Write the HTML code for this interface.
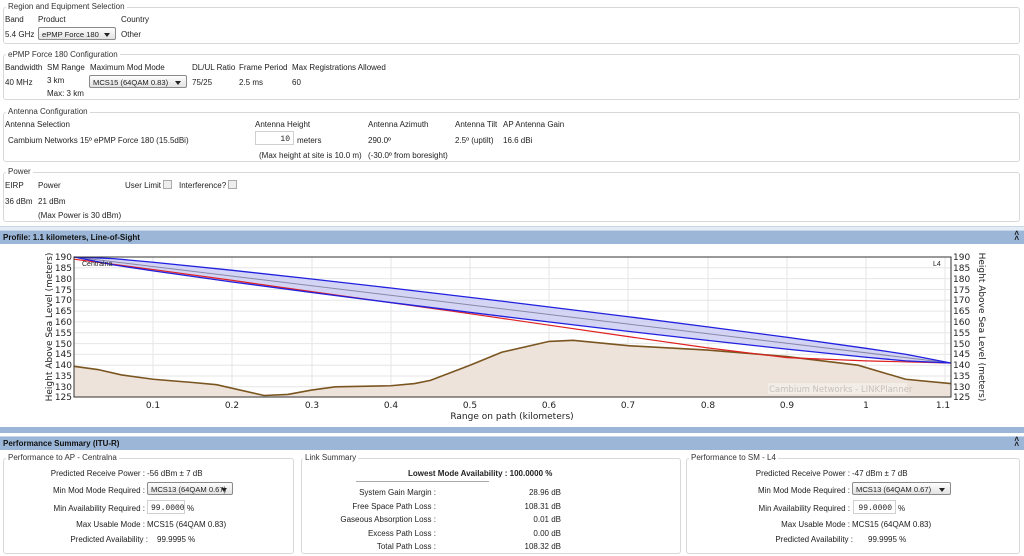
<!DOCTYPE html>
<html><head><meta charset="utf-8"><style>
*{margin:0;padding:0;box-sizing:border-box}
body{width:1024px;height:556px;background:#fff;font-family:"Liberation Sans",sans-serif;font-size:8px;color:#222;position:relative;overflow:hidden}
.a{position:absolute;white-space:nowrap}
.box{position:absolute;border:1px solid #d8d8d8;border-radius:3px}
.lg{position:absolute;background:#fff;padding:0 2px;white-space:nowrap;color:#333}
.sel{position:absolute;border:1px solid #8a8a8a;background:linear-gradient(#fdfdfd,#e2e2e2);height:13px;padding:2px 3px;border-radius:2px;white-space:nowrap;font-size:7.6px;overflow:hidden}
.sel:after{content:"";position:absolute;right:5px;top:5px;border:3px solid transparent;border-top:4px solid #222}
.inp{position:absolute;border:1px solid #d0d0d0;background:#fff;height:14px;text-align:right;padding:3px 3px;font-family:"Liberation Mono",monospace}
.cb{position:absolute;width:9px;height:9px;border:1px solid #aaa;background:#eee}
.hdr{position:absolute;left:0;width:1024px;height:14px;background:#9bb6d6;border-top:1px solid #c5d6ea;font-weight:bold;padding:2px 3px;color:#111}
.r{text-align:right}
</style></head><body>
<!-- Region -->
<div class="box" style="left:3px;top:7px;width:1017px;height:37px"></div>
<div class="lg" style="left:6px;top:2px">Region and Equipment Selection</div>
<div class="a" style="left:5px;top:15px">Band</div>
<div class="a" style="left:38px;top:15px">Product</div>
<div class="a" style="left:121px;top:15px">Country</div>
<div class="a" style="left:5px;top:30px">5.4 GHz</div>
<div class="sel" style="left:38px;top:27px;width:78px">ePMP Force 180</div>
<div class="a" style="left:121px;top:30px">Other</div>
<!-- ePMP -->
<div class="box" style="left:3px;top:54px;width:1017px;height:46px"></div>
<div class="lg" style="left:6px;top:50px">ePMP Force 180 Configuration</div>
<div class="a" style="left:5px;top:63px">Bandwidth</div>
<div class="a" style="left:47px;top:63px">SM Range</div>
<div class="a" style="left:90px;top:63px">Maximum Mod Mode</div>
<div class="a" style="left:192px;top:63px">DL/UL Ratio</div>
<div class="a" style="left:239px;top:63px">Frame Period</div>
<div class="a" style="left:292px;top:63px">Max Registrations Allowed</div>
<div class="a" style="left:5px;top:78px">40 MHz</div>
<div class="a" style="left:47px;top:76px">3 km</div>
<div class="a" style="left:47px;top:89px">Max: 3 km</div>
<div class="sel" style="left:89px;top:75px;width:98px">MCS15 (64QAM 0.83)</div>
<div class="a" style="left:192px;top:78px">75/25</div>
<div class="a" style="left:239px;top:78px">2.5 ms</div>
<div class="a" style="left:292px;top:78px">60</div>
<!-- Antenna -->
<div class="box" style="left:3px;top:112px;width:1017px;height:50px"></div>
<div class="lg" style="left:6px;top:107px">Antenna Configuration</div>
<div class="a" style="left:5px;top:120px">Antenna Selection</div>
<div class="a" style="left:255px;top:120px">Antenna Height</div>
<div class="a" style="left:368px;top:120px">Antenna Azimuth</div>
<div class="a" style="left:455px;top:120px">Antenna Tilt</div>
<div class="a" style="left:503px;top:120px">AP Antenna Gain</div>
<div class="a" style="left:8px;top:136px">Cambium Networks 15º ePMP Force 180 (15.5dBi)</div>
<div class="inp" style="left:255px;top:131px;width:39px">10</div>
<div class="a" style="left:297px;top:136px">meters</div>
<div class="a" style="left:368px;top:136px">290.0º</div>
<div class="a" style="left:455px;top:136px">2.5º (uptilt)</div>
<div class="a" style="left:503px;top:136px">16.6 dBi</div>
<div class="a" style="left:259px;top:151px">(Max height at site is 10.0 m)</div>
<div class="a" style="left:368px;top:151px">(-30.0º from boresight)</div>
<!-- Power -->
<div class="box" style="left:3px;top:172px;width:1017px;height:50px"></div>
<div class="lg" style="left:6px;top:167px">Power</div>
<div class="a" style="left:5px;top:181px">EIRP</div>
<div class="a" style="left:38px;top:181px">Power</div>
<div class="a" style="left:125px;top:181px">User Limit</div>
<div class="cb" style="left:163px;top:180px"></div>
<div class="a" style="left:179px;top:181px">Interference?</div>
<div class="cb" style="left:228px;top:180px"></div>
<div class="a" style="left:5px;top:197px">36 dBm</div>
<div class="a" style="left:38px;top:197px">21 dBm</div>
<div class="a" style="left:38px;top:211px">(Max Power is 30 dBm)</div>
<div style="position:absolute;left:0;top:226px;width:1024px;height:4px;background:#e4ecf5;border-top:1px solid #c8d6e6"></div>
<div class="hdr" style="top:230px">Profile: 1.1 kilometers, Line-of-Sight<span style="position:absolute;right:5px;top:0px;font-size:8px;line-height:5px">&#708;<br>&#708;</span></div>
<!-- chart -->
<svg class="a" style="left:0;top:0" width="1024" height="556">
<g stroke="#e6e6e6" stroke-width="1">
<line x1="74" x2="951" y1="267.8" y2="267.8"/><line x1="74" x2="951" y1="278.6" y2="278.6"/><line x1="74" x2="951" y1="289.5" y2="289.5"/><line x1="74" x2="951" y1="300.3" y2="300.3"/><line x1="74" x2="951" y1="311.1" y2="311.1"/><line x1="74" x2="951" y1="321.9" y2="321.9"/><line x1="74" x2="951" y1="332.7" y2="332.7"/><line x1="74" x2="951" y1="343.6" y2="343.6"/><line x1="74" x2="951" y1="354.4" y2="354.4"/><line x1="74" x2="951" y1="365.2" y2="365.2"/><line x1="74" x2="951" y1="376" y2="376"/><line x1="74" x2="951" y1="386.8" y2="386.8"/>
<line x1="153" x2="153" y1="257" y2="397"/><line x1="232" x2="232" y1="257" y2="397"/><line x1="312" x2="312" y1="257" y2="397"/><line x1="391" x2="391" y1="257" y2="397"/><line x1="470" x2="470" y1="257" y2="397"/><line x1="549" x2="549" y1="257" y2="397"/><line x1="628" x2="628" y1="257" y2="397"/><line x1="708" x2="708" y1="257" y2="397"/><line x1="787" x2="787" y1="257" y2="397"/><line x1="866" x2="866" y1="257" y2="397"/><line x1="945" x2="945" y1="257" y2="397"/>
</g>
<g transform="translate(74,257) scale(792,-2.164) translate(0,-190)">
<path d="M0,125 L0,139.5 0.03,138 0.06,135.5 0.1,133.5 0.15,132 0.18,131 0.24,126 0.27,126.5 0.3,128.5 0.33,130 0.4,130.5 0.43,131.5 0.45,133 0.5,140 0.54,146 0.6,151 0.63,151.5 0.7,149 0.8,147 0.9,144 0.99,140 1.05,133.5 1.107,131.5 L1.107,125Z" fill="#eee3da"/>
<path d="M0,139.5 0.03,138 0.06,135.5 0.1,133.5 0.15,132 0.18,131 0.24,126 0.27,126.5 0.3,128.5 0.33,130 0.4,130.5 0.43,131.5 0.45,133 0.5,140 0.54,146 0.6,151 0.63,151.5 0.7,149 0.8,147 0.9,144 0.99,140 1.05,133.5 1.107,131.5" fill="none" stroke="#7a5520" stroke-width="1.6" vector-effect="non-scaling-stroke"/>
<path d="M0,190 0.05,189.24 0.1,187.57 0.2,183.84 0.3,179.83 0.4,175.66 0.55,169.16 0.7,162.4 0.8,157.73 0.9,152.9 1.0,147.81 1.05,145.07 1.107,141 1.05,141.99 1.0,143.67 0.9,147.44 0.8,151.47 0.7,155.64 0.55,162.16 0.4,168.94 0.3,173.61 0.2,178.46 0.1,183.57 0.05,186.34Z" fill="#c9c9f2" fill-opacity="0.8"/>
<path d="M0,190 1.107,141" stroke="#8888a8" stroke-width="1" vector-effect="non-scaling-stroke"/>
<path d="M0,189 0.1,184.2 0.2,179.2 0.3,174 0.4,168.9 0.5,163.8 0.6,158.5 0.7,153.2 0.8,148 0.9,143.5 1.0,142 1.107,141" fill="none" stroke="#e02020" stroke-width="1.2" vector-effect="non-scaling-stroke"/>
<path d="M0,190 0.05,189.24 0.1,187.57 0.2,183.84 0.3,179.83 0.4,175.66 0.55,169.16 0.7,162.4 0.8,157.73 0.9,152.9 1.0,147.81 1.05,145.07 1.107,141" fill="none" stroke="#2020e0" stroke-width="1.3" vector-effect="non-scaling-stroke"/>
<path d="M0,190 0.05,186.34 0.1,183.57 0.2,178.46 0.3,173.61 0.4,168.94 0.55,162.16 0.7,155.64 0.8,151.47 0.9,147.44 1.0,143.67 1.05,141.99 1.107,141" fill="none" stroke="#2020e0" stroke-width="1.3" vector-effect="non-scaling-stroke"/>
</g>
<rect x="74" y="257" width="877" height="140" fill="none" stroke="#333" stroke-width="1"/>
<text x="82" y="266" font-family="Liberation Sans" font-size="7" fill="#222">Centralna</text>
<text x="933" y="266" font-family="Liberation Sans" font-size="7" fill="#222">L4</text>
<rect x="768" y="383" width="139" height="11" fill="#f3ede8"/>
<text x="769" y="392" font-family="DejaVu Sans" font-size="8.5" fill="#c8c0ba">Cambium Networks - LINKPlanner</text>
<g font-family="DejaVu Sans" font-size="9" fill="#222">
<g text-anchor="end">
<text x="72" y="260">190</text><text x="72" y="271">185</text><text x="72" y="282">180</text><text x="72" y="293">175</text><text x="72" y="303">170</text><text x="72" y="314">165</text><text x="72" y="325">160</text><text x="72" y="336">155</text><text x="72" y="347">150</text><text x="72" y="357">145</text><text x="72" y="368">140</text><text x="72" y="379">135</text><text x="72" y="390">130</text><text x="72" y="400">125</text>
</g>
<g>
<text x="953" y="260">190</text><text x="953" y="271">185</text><text x="953" y="282">180</text><text x="953" y="293">175</text><text x="953" y="303">170</text><text x="953" y="314">165</text><text x="953" y="325">160</text><text x="953" y="336">155</text><text x="953" y="347">150</text><text x="953" y="357">145</text><text x="953" y="368">140</text><text x="953" y="379">135</text><text x="953" y="390">130</text><text x="953" y="400">125</text>
</g>
<g text-anchor="middle">
<text x="153" y="408">0.1</text><text x="232" y="408">0.2</text><text x="312" y="408">0.3</text><text x="391" y="408">0.4</text><text x="470" y="408">0.5</text><text x="549" y="408">0.6</text><text x="628" y="408">0.7</text><text x="708" y="408">0.8</text><text x="787" y="408">0.9</text><text x="866" y="408">1</text><text x="943" y="408">1.1</text>
<text x="512" y="419">Range on path (kilometers)</text>
<text transform="translate(52,327) rotate(-90)">Height Above Sea Level (meters)</text>
<text transform="translate(979,327) rotate(90)">Height Above Sea Level (meters)</text>
</g></g>
</svg>
<div style="position:absolute;left:0;top:427px;width:1024px;height:6px;background:#9bb6d6"></div>
<div class="hdr" style="top:436px">Performance Summary (ITU-R)<span style="position:absolute;right:5px;top:0px;line-height:5px">&#708;<br>&#708;</span></div>
<!-- left perf -->
<div class="box" style="left:3px;top:458px;width:291px;height:96px"></div>
<div class="lg" style="left:6px;top:453px">Performance to AP - Centralna</div>
<div class="a r" style="right:879px;top:469px">Predicted Receive Power :</div><div class="a" style="left:147px;top:469px">-56 dBm ± 7 dB</div>
<div class="a r" style="right:879px;top:486px">Min Mod Mode Required :</div><div class="sel" style="left:147px;top:482px;width:86px">MCS13 (64QAM 0.67)</div>
<div class="a r" style="right:879px;top:504px">Min Availability Required :</div><div class="inp" style="left:147px;top:500px;width:38px">99.0000</div><div class="a" style="left:187px;top:504px">%</div>
<div class="a r" style="right:879px;top:520px">Max Usable Mode :</div><div class="a" style="left:147px;top:520px">MCS15 (64QAM 0.83)</div>
<div class="a r" style="right:876px;top:535px">Predicted Availability :</div><div class="a" style="left:157px;top:535px">99.9995 %</div>
<!-- link summary -->
<div class="box" style="left:301px;top:458px;width:380px;height:96px"></div>
<div class="lg" style="left:303px;top:453px">Link Summary</div>
<div class="a" style="left:408px;top:469px;font-weight:bold">Lowest Mode Availability : 100.0000 %</div>
<div style="position:absolute;left:356px;top:481px;width:133px;height:1px;background:#aaa"></div>
<div class="a r" style="right:588px;top:488px">System Gain Margin :</div><div class="a r" style="right:463px;top:488px">28.96 dB</div>
<div class="a r" style="right:588px;top:502px">Free Space Path Loss :</div><div class="a r" style="right:463px;top:502px">108.31 dB</div>
<div class="a r" style="right:588px;top:515px">Gaseous Absorption Loss :</div><div class="a r" style="right:463px;top:515px">0.01 dB</div>
<div class="a r" style="right:588px;top:529px">Excess Path Loss :</div><div class="a r" style="right:463px;top:529px">0.00 dB</div>
<div class="a r" style="right:588px;top:542px">Total Path Loss :</div><div class="a r" style="right:463px;top:542px">108.32 dB</div>
<!-- right perf -->
<div class="box" style="left:686px;top:458px;width:334px;height:96px"></div>
<div class="lg" style="left:689px;top:453px">Performance to SM - L4</div>
<div class="a r" style="right:174px;top:469px">Predicted Receive Power :</div><div class="a" style="left:852px;top:469px">-47 dBm ± 7 dB</div>
<div class="a r" style="right:174px;top:486px">Min Mod Mode Required :</div><div class="sel" style="left:852px;top:482px;width:99px">MCS13 (64QAM 0.67)</div>
<div class="a r" style="right:174px;top:504px">Min Availability Required :</div><div class="inp" style="left:853px;top:500px;width:43px">99.0000</div><div class="a" style="left:898px;top:504px">%</div>
<div class="a r" style="right:174px;top:520px">Max Usable Mode :</div><div class="a" style="left:852px;top:520px">MCS15 (64QAM 0.83)</div>
<div class="a r" style="right:171px;top:535px">Predicted Availability :</div><div class="a" style="left:868px;top:535px">99.9995 %</div>
</body></html>
